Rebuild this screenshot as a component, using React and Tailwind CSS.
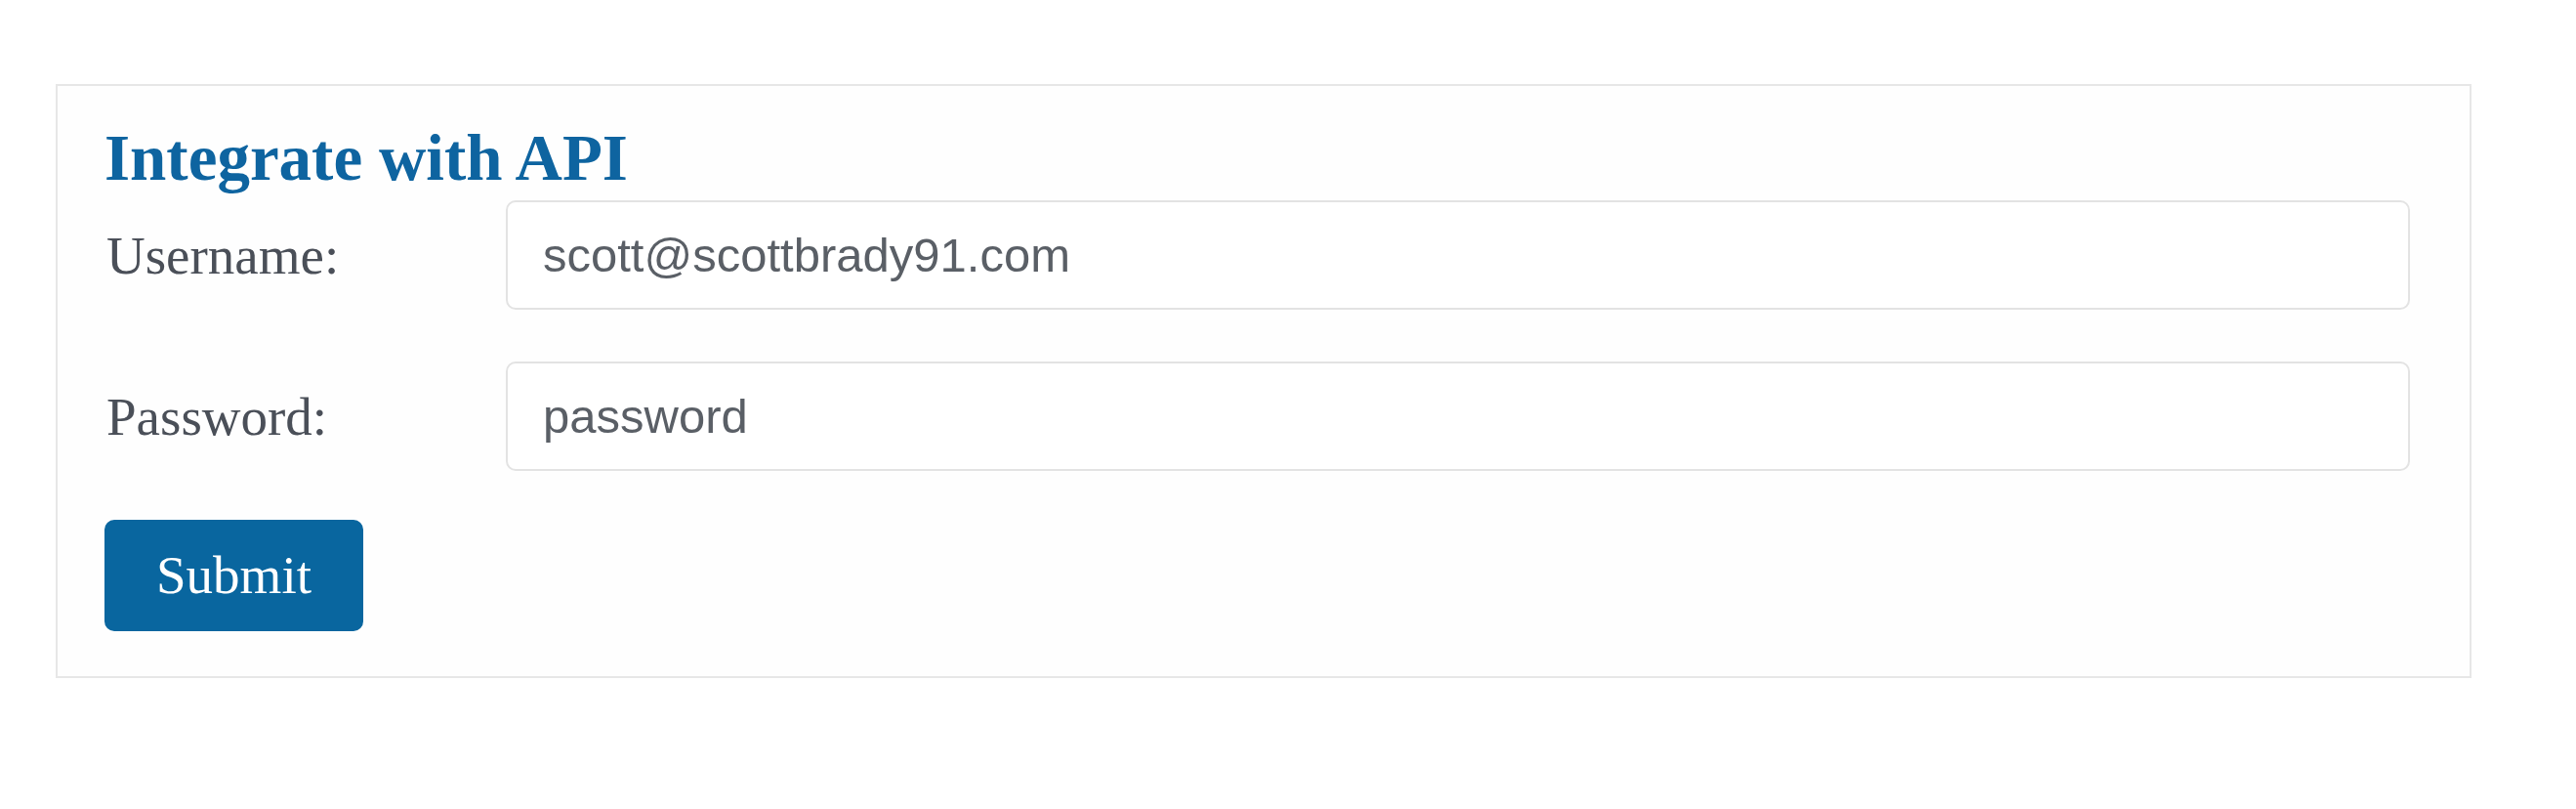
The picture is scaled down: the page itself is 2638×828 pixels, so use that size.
import React from 'react';

const serif = { fontFamily: '"Liberation Serif", "Times New Roman", serif' };

function Field({ label, value }) {
  return (
    <div className="flex items-center">
      <label className="w-[411px] shrink-0 pl-[2px] text-[55px] leading-none text-[#4a4f58]" style={serif}>
        {label}
      </label>
      <input
        readOnly
        value={value}
        className="h-[112px] flex-1 rounded-[10px] border-2 border-[#e3e3e3] bg-white px-[36px] text-[49px] text-[#5a5f66] outline-none font-['Liberation_Sans',Arial,sans-serif]"
      />
    </div>
  );
}

export default function App() {
  return (
    <div className="h-[828px] w-[2638px] bg-white pl-[57px] pr-[107px] pt-[86px]">
      <div className="border-2 border-[#e7e7e7] bg-[#fefefe] pb-[46px] pl-[48px] pr-[61px] pt-[34px]">
        <h2 className="text-[67px] font-bold leading-[79px] text-[#0e64a0]" style={serif}>
          Integrate with API
        </h2>
        <div className="mt-[4px] flex flex-col gap-[53px]">
          <Field label="Username:" value="scott@scottbrady91.com" />
          <Field label="Password:" value="password" />
        </div>
        <button
          className="mt-[50px] flex h-[114px] w-[265px] items-center justify-center rounded-[10px] bg-[#09669f] text-[55px] text-white"
          style={serif}
        >
          Submit
        </button>
      </div>
    </div>
  );
}
